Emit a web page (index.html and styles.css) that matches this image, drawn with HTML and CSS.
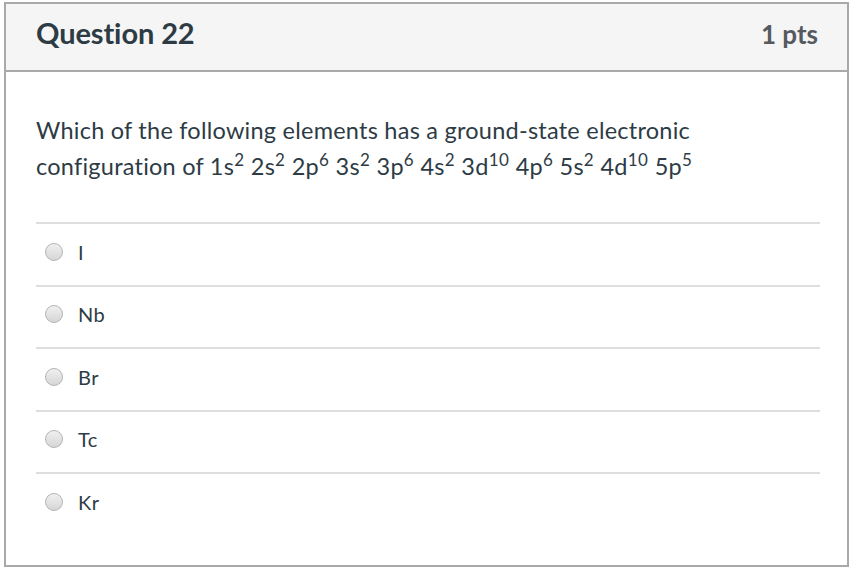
FILE: index.html
```html
<!DOCTYPE html>
<html>
<head>
<meta charset="utf-8">
<link rel="stylesheet" href="styles.css">
</head>
<body>
<div class="quiz">
  <div class="header">
    <h2 class="title">Question 22</h2>
    <div class="pts">1 pts</div>
  </div>
  <div class="content">
    <p class="question">Which of the following elements has a ground-state electronic<br>configuration of 1s<sup>2</sup> 2s<sup>2</sup> 2p<sup>6</sup> 3s<sup>2</sup> 3p<sup>6</sup> 4s<sup>2</sup> 3d<sup>10</sup> 4p<sup>6</sup> 5s<sup>2</sup> 4d<sup>10</sup> 5p<sup>5</sup></p>
    <div class="answers">
      <div class="answer"><span class="radio"></span><span class="label">I</span></div>
      <div class="answer"><span class="radio"></span><span class="label">Nb</span></div>
      <div class="answer"><span class="radio"></span><span class="label">Br</span></div>
      <div class="answer"><span class="radio"></span><span class="label">Tc</span></div>
      <div class="answer"><span class="radio"></span><span class="label">Kr</span></div>
    </div>
  </div>
</div>
</body>
</html>
```
FILE: styles.css
```css
html, body {
  margin: 0;
  padding: 0;
  background: #fff;
}
body {
  font-family: Lato, "Open Sans", sans-serif;
  color: #2d3b45;
}
.quiz {
  margin: 2px 0 0 4px;
  width: 841px;
  height: 561px;
  border: 2px solid #a9a9a9;
}
.header {
  height: 54px;
  background: #f5f5f5;
  border-bottom: 2px solid #a9a9a9;
  display: flex;
  align-items: baseline;
  justify-content: space-between;
  padding: 12px 29px 0 30px;
}
.title {
  margin: 0;
  font-size: 29px;
  line-height: 1.2;
  font-weight: 700;
  color: #2d3b45;
  letter-spacing: -0.1px;
}
.pts {
  font-size: 26px;
  line-height: 1.2;
  font-weight: 700;
  color: #555a5f;
}
.content {
  padding: 0 27px 0 30px;
}
.question {
  margin: 0;
  padding-top: 40px;
  font-size: 23.5px;
  letter-spacing: 0.24px;
  line-height: 36px;
}
.question sup {
  font-size: 17px;
  line-height: 0;
  vertical-align: 0;
  position: relative;
  top: -9px;
  letter-spacing: 0.5px;
}
.answers {
  margin-top: 38px;
}
.answer {
  border-top: 2px solid #dedede;
  display: flex;
  align-items: center;
  padding-left: 9px;
  padding-bottom: 5px;
  box-sizing: border-box;
  height: 62.5px;
}
.radio {
  width: 16px;
  height: 16px;
  border-radius: 50%;
  border: 1px solid #b4b4b4;
  background: linear-gradient(#f0f0f0, #d6d6d6);
  margin-right: 15px;
  flex: none;
}
.label {
  font-size: 20px;
  letter-spacing: 0.5px;
  color: #2d3b45;
}
```
